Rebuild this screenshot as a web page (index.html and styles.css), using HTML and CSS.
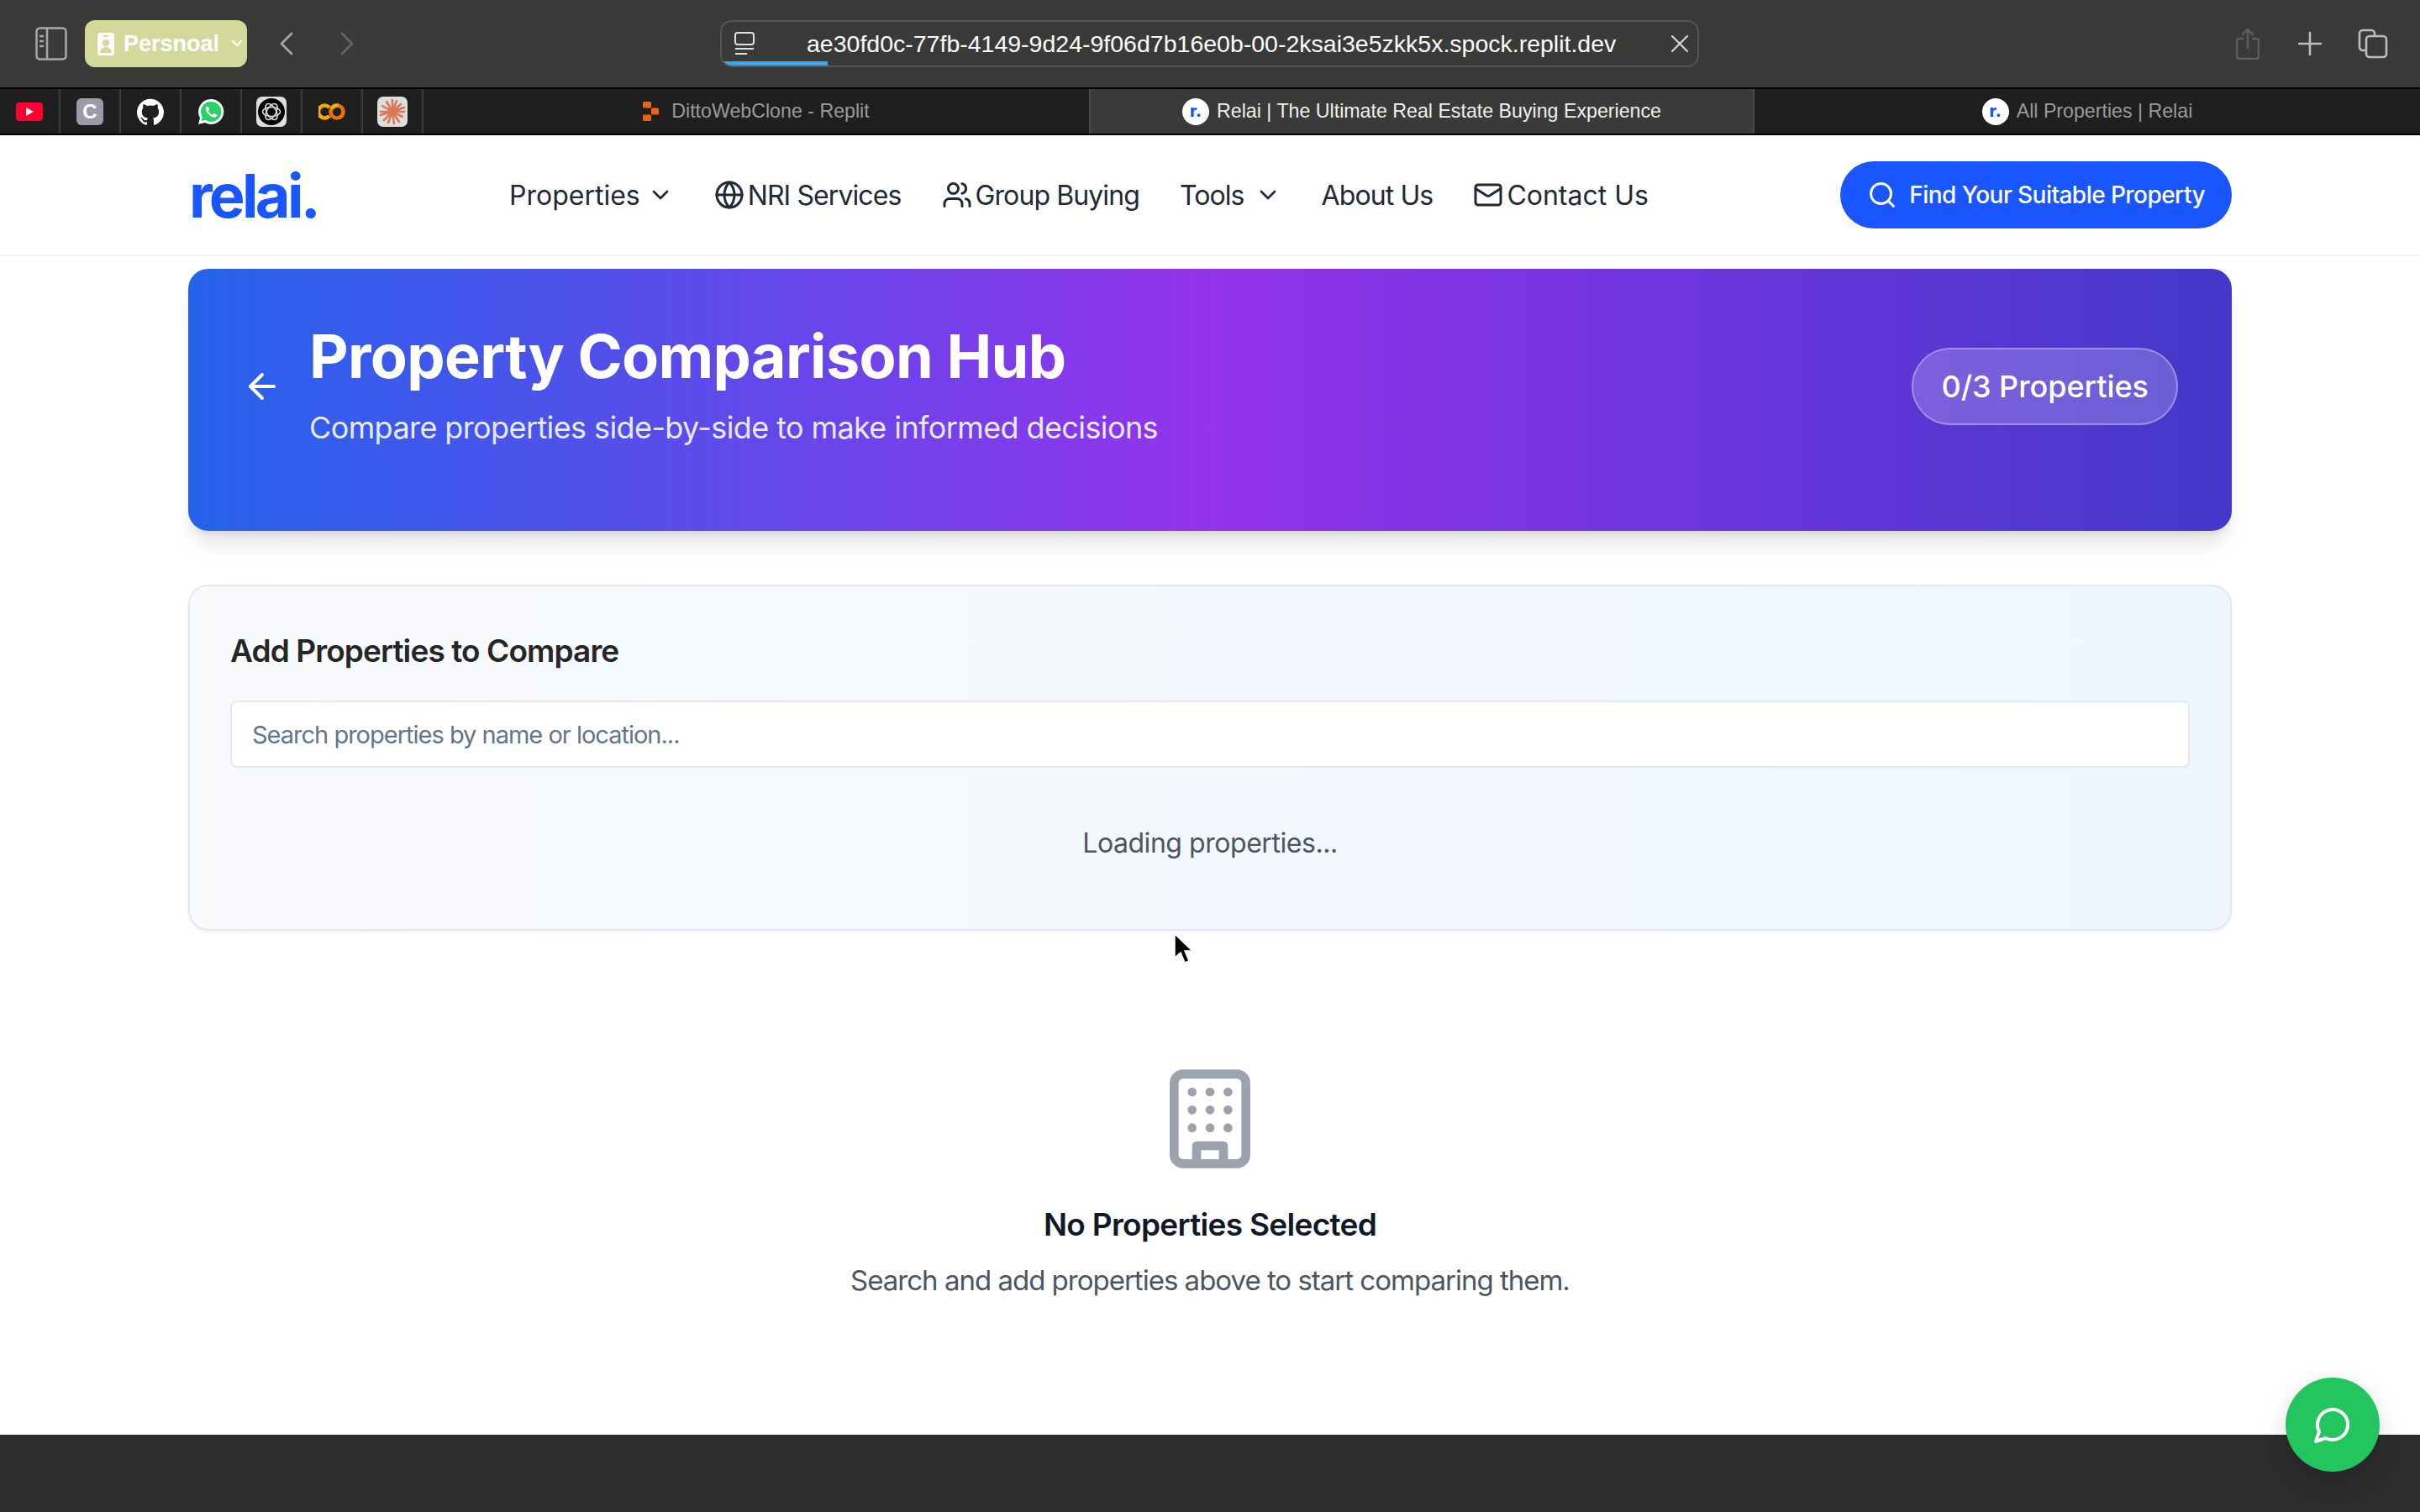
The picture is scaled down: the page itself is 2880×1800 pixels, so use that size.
FILE: index.html
```html
<!DOCTYPE html>
<html lang="en">
<head>
  <meta charset="UTF-8">
  <title>Relai | The Ultimate Real Estate Buying Experience</title>
  <link rel="stylesheet" href="styles.css">
</head>
<body>
  <!-- Browser toolbar -->
  <div class="toolbar">
    <div class="toolbar-left">
      <svg class="tb-sidebar" viewBox="0 0 38 40" fill="none" stroke="#a8a8a6" stroke-width="2.5"><rect x="1.5" y="1.5" width="35" height="37" rx="4"/><path d="M14 2v36M5 11h5M5 17h5M5 23h5"/></svg>
      <div class="profile">
        <svg class="profile-icon" viewBox="0 0 20 27"><path fill="#fff" fill-rule="evenodd" d="M3 0h14a3 3 0 0 1 3 3v21a3 3 0 0 1-3 3H3a3 3 0 0 1-3-3V3a3 3 0 0 1 3-3zm4 3v2h6V3zm3 5a4 4 0 1 0 0 8 4 4 0 0 0 0-8zm-7 16h14c0-4-3-7-7-7s-7 3-7 7z"/></svg>
        <span class="profile-name">Persnoal</span>
        <svg class="profile-chev" viewBox="0 0 14 10" fill="none" stroke="#fff" stroke-width="2.4" stroke-linecap="round" stroke-linejoin="round"><path d="M2 2l5 5 5-5"/></svg>
      </div>
      <svg class="tb-nav" viewBox="0 0 16 28" fill="none" stroke="#a8a8a6" stroke-width="2.6" stroke-linecap="round" stroke-linejoin="round"><path d="M14 2L2 14l12 12"/></svg>
      <svg class="tb-nav tb-next" viewBox="0 0 16 28" fill="none" stroke="#666664" stroke-width="2.6" stroke-linecap="round" stroke-linejoin="round"><path d="M2 2l12 12L2 26"/></svg>
    </div>
    <div class="urlbar">
      <svg class="url-icon" viewBox="0 0 24 28" fill="none" stroke="#e0e0e0" stroke-width="2"><rect x="1" y="1" width="22" height="14" rx="3"/><path d="M1 20h22M1 26h14"/></svg>
      <span class="url-text">ae30fd0c-77fb-4149-9d24-9f06d7b16e0b-00-2ksai3e5zkk5x.spock.replit.dev</span>
      <svg class="url-close" viewBox="0 0 20 20" fill="none" stroke="#dcdcdc" stroke-width="2" stroke-linecap="round"><path d="M1 1l18 18M19 1L1 19"/></svg>
      <div class="url-progress"></div>
    </div>
    <div class="toolbar-right">
      <svg class="tb-share" viewBox="0 0 28 38" fill="none" stroke="#5f5f5d" stroke-width="2.4" stroke-linecap="round" stroke-linejoin="round"><path d="M8 13H4a3 3 0 0 0-3 3v18a3 3 0 0 0 3 3h20a3 3 0 0 0 3-3V16a3 3 0 0 0-3-3h-4M14 24V2M8 8l6-6 6 6"/></svg>
      <svg class="tb-plus" viewBox="0 0 28 28" fill="none" stroke="#bdbdbb" stroke-width="2.6" stroke-linecap="round"><path d="M14 1v26M1 14h26"/></svg>
      <svg class="tb-tabs" viewBox="0 0 36 36" fill="none" stroke="#bdbdbb" stroke-width="2.6"><path d="M9 26H6a4 4 0 0 1-4-4V6a4 4 0 0 1 4-4h10a4 4 0 0 1 4 4v3"/><rect x="10" y="9" width="24" height="25" rx="4"/></svg>
    </div>
  </div>

  <!-- Bookmarks and tabs -->
  <div class="tabstrip">
    <div class="bookmarks">
      <div class="bm"><svg class="fav-yt" viewBox="0 0 32 22"><rect width="32" height="22" rx="4" fill="#ff0033"/><path d="M12 6l9 5-9 5z" fill="#fff"/></svg></div>
      <div class="bm"><div class="fav-c">C</div></div>
      <div class="bm">
        <svg class="fav" viewBox="0 0 24 24"><path fill="#fff" d="M12 .5C5.37.5 0 5.87 0 12.5c0 5.3 3.44 9.8 8.2 11.39.6.11.82-.26.82-.58v-2.03c-3.34.73-4.04-1.61-4.04-1.61-.55-1.39-1.34-1.76-1.34-1.76-1.09-.74.08-.73.08-.73 1.2.08 1.84 1.24 1.84 1.24 1.07 1.84 2.81 1.31 3.5 1 .11-.78.42-1.31.76-1.61-2.67-.3-5.47-1.33-5.47-5.93 0-1.31.47-2.38 1.24-3.22-.14-.3-.54-1.52.1-3.18 0 0 1-.32 3.3 1.23a11.5 11.5 0 0 1 6 0c2.28-1.55 3.29-1.23 3.29-1.23.64 1.66.24 2.88.12 3.18a4.65 4.65 0 0 1 1.23 3.22c0 4.61-2.8 5.63-5.48 5.92.42.36.81 1.1.81 2.22v3.29c0 .32.22.7.82.58A12 12 0 0 0 24 12.5C24 5.87 18.63.5 12 .5z"/></svg>
      </div>
      <div class="bm">
        <svg class="fav" viewBox="0 0 32 32"><path fill="#fff" d="M16 1a15 15 0 0 0-13 22.4L1 31l7.8-2A15 15 0 1 0 16 1z"/><path fill="#25d366" d="M16 4a12 12 0 0 0-10.2 18.3L4.6 27l4.8-1.2A12 12 0 1 0 16 4z"/><path fill="#fff" d="M11.6 9.2c-.6 0-1.8 1-1.8 3 0 3.800 4.800 9.600 10 10.400 2 .2 3.400-1.200 3.400-2.400 0-.6-.2-.8-.6-1l-2.600-1.200c-.4-.2-.8 0-1 .2l-1 1.200c-.2.200-.6.200-1 0-1.600-.8-3-2-4-3.800-.2-.4 0-.6.200-.8l.8-1c.2-.3.2-.6.100-.9l-1-2.500c-.2-.4-.5-.6-1-.6z"/></svg>
      </div>
      <div class="bm">
        <div class="fav-tile">
          <svg class="fav-gpt" viewBox="0 0 32 32"><circle cx="16" cy="16" r="16" fill="#000"/><g fill="none" stroke="#ddd" stroke-width="1.5"><ellipse cx="16" cy="16" rx="10.500" ry="5.500"/><ellipse cx="16" cy="16" rx="10.500" ry="5.500" transform="rotate(60 16 16)"/><ellipse cx="16" cy="16" rx="10.500" ry="5.500" transform="rotate(120 16 16)"/></g></svg>
        </div>
      </div>
      <div class="bm">
        <svg class="fav-colab" viewBox="0 0 32 20" fill="none" stroke-width="4.600"><path stroke="#f9ab00" d="M13 5a7.500 7.500 0 1 0 0 10"/><circle cx="22" cy="10" r="7.500" stroke="#e8710a"/><path stroke="#f9ab00" d="M15.800 6.500a7.500 7.500 0 0 1 8-3.800"/></svg>
      </div>
      <div class="bm">
        <div class="fav-tile">
          <svg class="fav-burst" viewBox="0 0 32 32" stroke="#d97757" stroke-width="2.600" stroke-linecap="round"><path d="M16 16V2M16 16l5-13M16 16l10-9M16 16l14-5M16 16h14M16 16l12 6M16 16l8 12M16 16l2 14M16 16l-5 13M16 16L6 26M16 16L2 20M16 16H2M16 16L4 9M16 16L9 4"/></svg>
        </div>
      </div>
    </div>
    <div class="tab">
      <svg class="fav-replit" viewBox="0 0 19 23" fill="#f26207"><rect width="10" height="7.500" rx="1.500"/><rect x="10" y="7.500" width="9" height="8" rx="1.500"/><rect y="15.500" width="10" height="7.500" rx="1.500"/></svg>
      <span>DittoWebClone - Replit</span>
    </div>
    <div class="tab tab-active">
      <div class="fav-relai">r.</div>
      <span>Relai | The Ultimate Real Estate Buying Experience</span>
    </div>
    <div class="tab tab-last">
      <div class="fav-relai">r.</div>
      <span>All Properties | Relai</span>
    </div>
  </div>

  <!-- Site header -->
  <header class="site-header">
    <div class="container header-inner">
      <a class="logo">relai.</a>
      <nav class="nav">
        <a class="nav-link nav-drop nav-properties">Properties <svg class="icon-chev" viewBox="0 0 24 24"><path d="m6 9 6 6 6-6"/></svg></a>
        <a class="nav-link"><svg class="icon" viewBox="0 0 24 24"><circle cx="12" cy="12" r="10"/><path d="M12 2a14.5 14.500 0 0 0 0 20 14.500 14.500 0 0 0 0-20"/><path d="M2 12h20"/></svg>NRI Services</a>
        <a class="nav-link"><svg class="icon" viewBox="0 0 24 24"><path d="M16 21v-2a4 4 0 0 0-4-4H6a4 4 0 0 0-4 4v2"/><circle cx="9" cy="7" r="4"/><path d="M22 21v-2a4 4 0 0 0-3-3.870"/><path d="M16 3.130a4 4 0 0 1 0 7.750"/></svg>Group Buying</a>
        <a class="nav-link nav-drop">Tools <svg class="icon-chev" viewBox="0 0 24 24"><path d="m6 9 6 6 6-6"/></svg></a>
        <a class="nav-link">About Us</a>
        <a class="nav-link nav-contact"><svg class="icon" viewBox="0 0 24 24"><rect width="20" height="16" x="2" y="4" rx="2"/><path d="m22 7-8.970 5.700a1.940 1.940 0 0 1-2.060 0L2 7"/></svg>Contact Us</a>
      </nav>
      <a class="cta"><svg class="icon" viewBox="0 0 24 24"><circle cx="11" cy="11" r="8"/><path d="m21 21-4.300-4.300"/></svg>Find Your Suitable Property</a>
    </div>
  </header>

  <!-- Main Content -->
  <main class="page">
    <div class="container">
      <section class="hero">
        <svg class="hero-back" viewBox="0 0 24 24"><path d="m12 19-7-7 7-7"/><path d="M19 12H5"/></svg>
        <div class="hero-text">
          <h1>Property Comparison Hub</h1>
          <p>Compare properties side-by-side to make informed decisions</p>
        </div>
        <div class="hero-badge">0/3 Properties</div>
      </section>

      <section class="add-card">
        <h2>Add Properties to Compare</h2>
        <input class="search" type="text" placeholder="Search properties by name or location...">
        <p class="loading">Loading properties...</p>
      </section>

      <section class="empty">
        <svg class="empty-icon" viewBox="0 0 24 24"><rect width="16" height="20" x="4" y="2" rx="2" ry="2"/><path d="M9 22v-4h6v4"/><path d="M8 6h.01"/><path d="M16 6h.01"/><path d="M12 6h.01"/><path d="M12 10h.01"/><path d="M12 14h.01"/><path d="M16 10h.01"/><path d="M16 14h.01"/><path d="M8 10h.01"/><path d="M8 14h.01"/></svg>
        <h3>No Properties Selected</h3>
        <p>Search and add properties above to start comparing them.</p>
      </section>
    </div>
  </main>

  <!-- Footer -->
  <footer class="site-footer"></footer>

  <a class="chat-btn"><svg viewBox="0 0 24 24"><path d="M7.900 20A9 9 0 1 0 4 16.100L2 22Z"/></svg></a>

  <svg class="cursor" viewBox="0 0 24 36"><path d="M2 1v28l7-6 5 12 5-2-5-12h9z" fill="#000" stroke="#fff" stroke-width="1.500"/></svg>
</body>
</html>
```

FILE: styles.css
```css
/* General Styles */
* {
  box-sizing: border-box;
}

html,
body {
  margin: 0;
  padding: 0;
}

body {
  position: relative;
  display: flex;
  flex-direction: column;
  height: 1800px;
  overflow: hidden;
  background: #fff;
  font-family: 'Inter', 'Liberation Sans', sans-serif;
  color: #1f2937;
}

.container {
  width: 2432px;
  margin: 0 auto;
}

/* Browser toolbar */
.toolbar {
  display: grid;
  grid-template-columns: 857px 1165px 1fr;
  align-items: center;
  height: 104px;
  background: #3a3a38;
}

.toolbar-left {
  display: flex;
  align-items: center;
  padding-left: 42px;
}

.tb-sidebar {
  width: 38px;
  height: 40px;
  margin-right: 21px;
}

.profile {
  display: flex;
  align-items: center;
  width: 193px;
  height: 56px;
  padding-left: 15px;
  background: #d3d99b;
  border-radius: 12px;
  color: #fff;
}

.profile-icon {
  width: 20px;
  height: 27px;
  margin-right: 11px;
}

.profile-name {
  font-family: 'Liberation Sans', sans-serif;
  font-size: 27px;
  font-weight: 700;
}

.profile-chev {
  width: 14px;
  height: 10px;
  margin-left: 14px;
}

.tb-nav {
  width: 16px;
  height: 28px;
  margin-left: 39px;
}

.tb-next {
  margin-left: 56px;
}

.urlbar {
  position: relative;
  display: flex;
  align-items: center;
  height: 56px;
  padding-left: 15px;
  border: 2px solid #555553;
  border-radius: 14px;
  overflow: hidden;
}

.url-icon {
  width: 24px;
  height: 28px;
  margin-right: 62px;
}

.url-text {
  font-family: 'Liberation Sans', sans-serif;
  font-size: 28.5px;
  color: #fff;
  white-space: nowrap;
}

.url-close {
  width: 20px;
  height: 20px;
  margin-left: auto;
  margin-right: 11px;
}

.url-progress {
  position: absolute;
  left: 0;
  bottom: 0;
  width: 126px;
  height: 5px;
  background: #30a8ff;
}

.toolbar-right {
  display: flex;
  align-items: center;
  padding-left: 639px;
}

.tb-share {
  width: 28px;
  height: 38px;
  margin-right: 46px;
}

.tb-plus {
  width: 28px;
  height: 28px;
  margin-right: 43px;
}

.tb-tabs {
  width: 36px;
  height: 36px;
}

/* Bookmarks and tabs */
.tabstrip {
  display: grid;
  grid-template-columns: 504px 1fr 1fr 1fr;
  height: 57px;
  border-top: 2px solid #000;
  border-bottom: 2px solid #000;
  background: #1f1f1f;
}

.bookmarks {
  display: flex;
}

.bm {
  display: flex;
  align-items: center;
  justify-content: center;
  width: 72px;
  border-right: 2px solid #3c3c3c;
}

.fav {
  width: 32px;
  height: 32px;
}

.fav-yt {
  width: 32px;
  height: 22px;
}

.fav-c {
  width: 32px;
  height: 32px;
  background: #9a9ba8;
  border-radius: 6px;
  color: #fff;
  font-family: 'Liberation Sans', sans-serif;
  font-size: 24px;
  font-weight: 700;
  line-height: 32px;
  text-align: center;
}

.fav-tile {
  display: flex;
  align-items: center;
  justify-content: center;
  width: 36px;
  height: 36px;
  background: #dedede;
  border-radius: 7px;
}

.fav-gpt {
  width: 32px;
  height: 32px;
}

.fav-burst {
  width: 32px;
  height: 32px;
}

.fav-colab {
  width: 32px;
  height: 20px;
}

.tab {
  display: flex;
  align-items: center;
  justify-content: center;
  gap: 9px;
  font-family: 'Liberation Sans', sans-serif;
  font-size: 23.2px;
  color: #9a9a9a;
}

.tab-active {
  background: #3a3a38;
  color: #efefef;
  border-left: 2px solid #4a4a48;
  border-right: 2px solid #4a4a48;
}

.fav-replit {
  width: 19px;
  height: 23px;
  margin-right: 6px;
}

.fav-relai {
  width: 32px;
  height: 32px;
  background: #fff;
  border-radius: 50%;
  color: #1a56ff;
  font-family: 'Inter', sans-serif;
  font-size: 20px;
  font-weight: 800;
  line-height: 30px;
  text-align: center;
}

/* Site header */
.site-header {
  height: 144px;
  border-bottom: 2px solid #f3f4f6;
  background: #fff;
}

.header-inner {
  display: flex;
  align-items: center;
  height: 142px;
}

.logo {
  width: 382px;
  padding-left: 1px;
  color: #1a56ff;
  font-size: 72px;
  font-weight: 700;
  letter-spacing: -3.7px;
}

.nav {
  display: flex;
  align-items: center;
  gap: 48px;
}

.nav-link {
  display: flex;
  align-items: center;
  gap: 4px;
  color: #1f2937;
  font-size: 32px;
  letter-spacing: -0.9px;
  white-space: nowrap;
}

.nav-drop {
  gap: 12px;
}

.nav-properties {
  gap: 8px;
  letter-spacing: 0;
}

.nav-contact {
  letter-spacing: 0;
}

.icon,
.icon-chev {
  fill: none;
  stroke: currentColor;
  stroke-width: 2;
  stroke-linecap: round;
  stroke-linejoin: round;
}

.icon {
  width: 36px;
  height: 36px;
}

.icon-chev {
  width: 32px;
  height: 32px;
}

.cta {
  display: flex;
  align-items: center;
  gap: 14px;
  height: 80px;
  margin-left: auto;
  padding: 0 32px;
  background: #1a56ff;
  border-radius: 40px;
  color: #fff;
  font-size: 28px;
  font-weight: 500;
  letter-spacing: -0.55px;
  white-space: nowrap;
}

/* Hero */
.page {
  flex: 1;
}

.hero {
  display: flex;
  align-items: center;
  height: 312px;
  margin-top: 15px;
  padding: 0 64px 32px;
  background: linear-gradient(to right, #2563eb, #9333ea, #4338ca);
  border-radius: 24px;
  box-shadow: 0 20px 25px -5px rgba(0, 0, 0, 0.1), 0 8px 10px -6px rgba(0, 0, 0, 0.1);
  color: #fff;
}

.hero-back {
  width: 48px;
  height: 48px;
  margin-right: 32px;
  fill: none;
  stroke: #fff;
  stroke-width: 2;
  stroke-linecap: round;
  stroke-linejoin: round;
}

.hero-text h1 {
  margin: 0 0 17px;
  font-size: 72px;
  font-weight: 700;
  letter-spacing: -0.7px;
  line-height: 80px;
}

.hero-text p {
  margin: 0;
  color: #e6e9ff;
  font-size: 36px;
  letter-spacing: -0.6px;
  line-height: 56px;
}

.hero-badge {
  margin-left: auto;
  padding: 19px 33px;
  background: rgba(255, 255, 255, 0.2);
  border: 2px solid rgba(255, 255, 255, 0.3);
  border-radius: 46px;
  font-size: 36px;
  font-weight: 500;
  line-height: 50px;
}

/* Add card */
.add-card {
  height: 412px;
  margin-top: 64px;
  padding: 49px 48px;
  background: linear-gradient(to right, #f8fafc, #eff6ff);
  border: 2px solid #e2e8f0;
  border-radius: 24px;
  box-shadow: 0 2px 4px rgba(0, 0, 0, 0.05);
}

.add-card h2 {
  margin: 0 0 31px;
  color: #262626;
  font-size: 37px;
  font-weight: 600;
  letter-spacing: -0.9px;
  line-height: 56px;
}

.search {
  display: block;
  width: 100%;
  height: 80px;
  padding: 0 24px;
  background: #fff;
  border: 2px solid #e2e8f0;
  border-radius: 8px;
  font-family: inherit;
  font-size: 29px;
  letter-spacing: -1px;
}

.search::placeholder {
  color: #64748b;
}

.loading {
  margin: 66px 0 0;
  color: #4b5563;
  font-size: 32px;
  letter-spacing: -0.45px;
  line-height: 48px;
  text-align: center;
}

/* Empty state */
.empty {
  padding-top: 160px;
  text-align: center;
}

.empty-icon {
  display: block;
  width: 128px;
  height: 128px;
  margin: 0 auto 34px;
  fill: none;
  stroke: #9ca3af;
  stroke-width: 2;
  stroke-linecap: round;
  stroke-linejoin: round;
}

.empty h3 {
  margin: 0 0 10px;
  color: #111827;
  font-size: 37px;
  font-weight: 600;
  letter-spacing: -0.7px;
  line-height: 56px;
}

.empty p {
  margin: 0;
  color: #4b5563;
  font-size: 33px;
  letter-spacing: -1px;
  line-height: 56px;
}

/* Footer */
.site-footer {
  height: 92px;
  background: #2c2c2e;
}

/* Overlays */
.chat-btn {
  position: absolute;
  right: 48px;
  bottom: 48px;
  display: flex;
  align-items: center;
  justify-content: center;
  width: 112px;
  height: 112px;
  background: #22c55e;
  border-radius: 50%;
  box-shadow: 0 10px 30px rgba(0, 0, 0, 0.15);
}

.chat-btn svg {
  width: 48px;
  height: 48px;
  fill: none;
  stroke: #fff;
  stroke-width: 2;
  stroke-linecap: round;
  stroke-linejoin: round;
}

.cursor {
  position: absolute;
  left: 1396px;
  top: 1111px;
  width: 24px;
  height: 36px;
}
```
